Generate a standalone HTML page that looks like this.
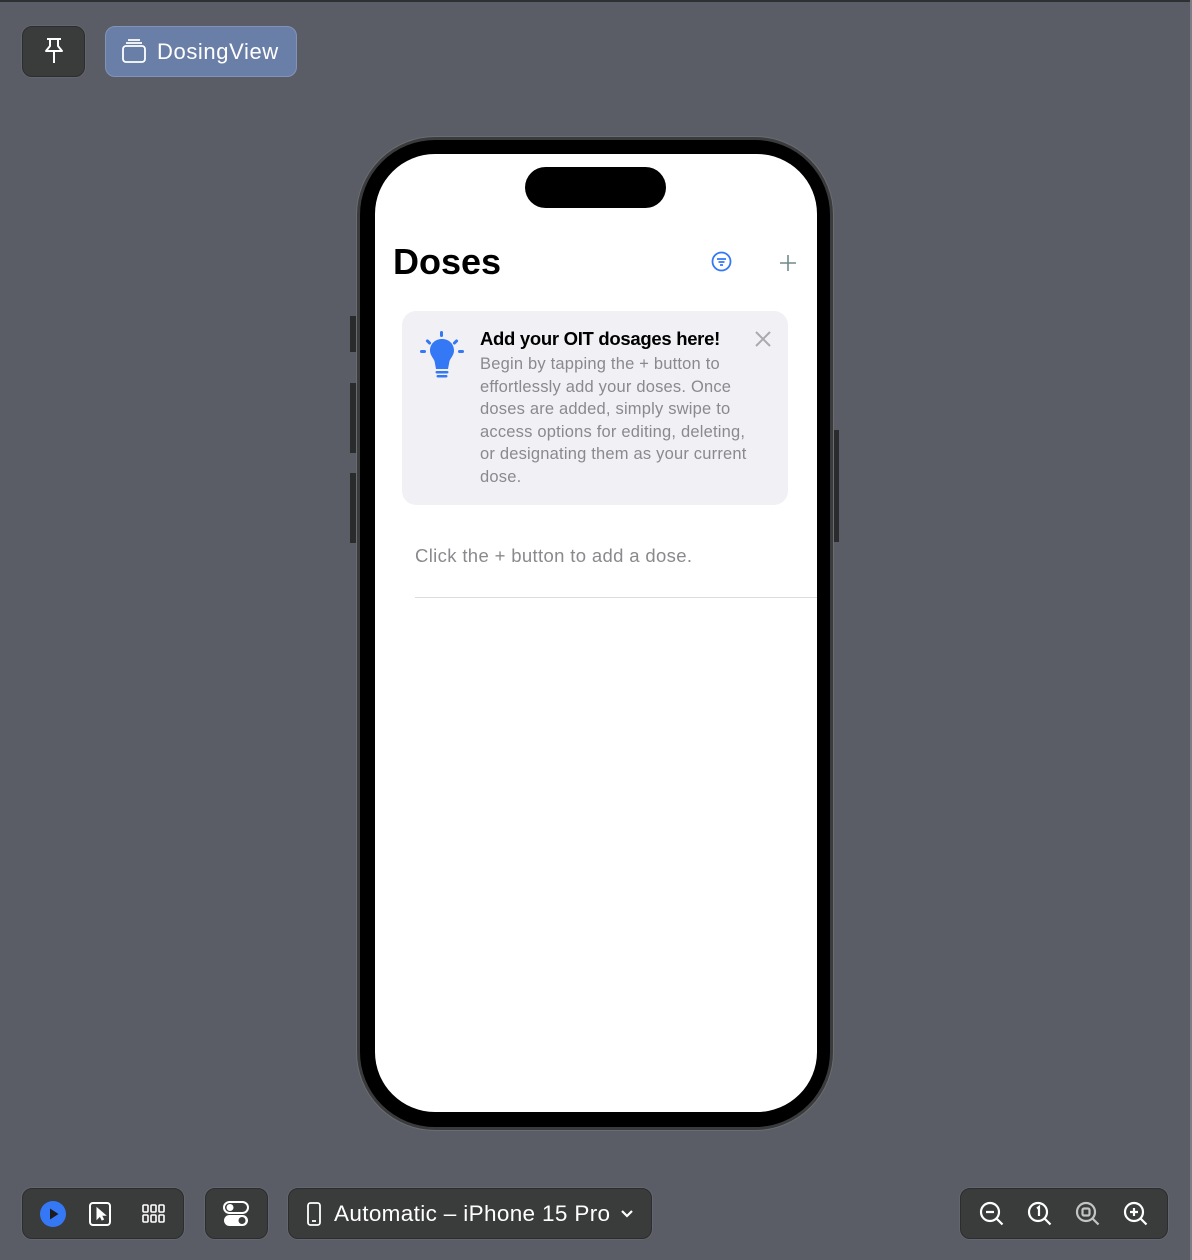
<!DOCTYPE html>
<html><head><meta charset="utf-8"><style>
*{margin:0;padding:0;box-sizing:border-box}
body{width:1192px;height:1260px;background:#5a5d65;font-family:"Liberation Sans",sans-serif;position:relative;overflow:hidden}
.topline{position:absolute;left:0;top:0;width:1192px;height:2px;background:#2e3033}
.rline{position:absolute;right:0;top:0;width:2px;height:1260px;background:#7b7e84}
.btn{position:absolute;background:#3a3b3b;border:1px solid #2c2d2e;border-radius:10px;box-shadow:0 0 0 1px rgba(255,255,255,.06)}
.phone{position:absolute;left:357px;top:137px;width:476px;height:993px;border-radius:78px;background:#000;border:3px solid #3a3b3d;box-shadow:0 0 0 1px #6a6c70}
.screen{position:absolute;left:375px;top:154px;width:442px;height:958px;border-radius:60px;background:#fff;overflow:hidden}
.side{position:absolute;background:#2a2b2d;width:6px}
</style></head><body>
<div class="topline"></div><div class="rline"></div>

<div class="btn" style="left:22px;top:26px;width:63px;height:51px;"></div>
<svg style="position:absolute;left:40px;top:36px" width="28" height="32" viewBox="0 0 28 32" fill="none" stroke="#fff" stroke-width="2" stroke-linejoin="round"><path d="M7 3h14M10 3v7l-4 5h16l-4-5V3M14 15v12"/></svg>

<div style="position:absolute;left:105px;top:26px;width:192px;height:51px;background:#6a7fa8;border-radius:10px;border:1px solid #8193b8"></div>
<svg style="position:absolute;left:121px;top:38px" width="26" height="26" viewBox="0 0 26 26" fill="none" stroke="#fff" stroke-width="1.8"><path d="M7 2h12M5 5h16"/><rect x="2" y="8" width="22" height="16" rx="3"/></svg>
<div style="position:absolute;left:157px;top:39px;color:#fff;font-size:22px;letter-spacing:0.6px">DosingView</div>

<div class="side" style="left:350px;top:316px;height:36px"></div>
<div class="side" style="left:350px;top:383px;height:70px"></div>
<div class="side" style="left:350px;top:473px;height:70px"></div>
<div class="side" style="left:833px;top:430px;height:112px"></div>

<div class="phone"></div>
<div class="screen">
  <div style="position:absolute;left:150px;top:13px;width:141px;height:41px;border-radius:21px;background:#000"></div>
  <div style="position:absolute;left:18px;top:87px;font-size:36px;font-weight:bold;color:#000">Doses</div>
  <svg style="position:absolute;left:336px;top:97px" width="21" height="21" viewBox="0 0 21 21" fill="none" stroke="#3478f6" stroke-width="1.8"><circle cx="10.5" cy="10.5" r="9"/><path d="M6 8h9M7.5 11h6M9 14h3"/></svg>
  <svg style="position:absolute;left:403px;top:99px" width="20" height="20" viewBox="0 0 20 20" stroke="#6f8a8c" stroke-width="1.6"><path d="M10 2v16M2 10h16"/></svg>
  <div style="position:absolute;left:27px;top:157px;width:386px;height:194px;border-radius:14px;background:#f1f1f5"></div>
  <svg style="position:absolute;left:44px;top:176px" width="46" height="52" viewBox="0 0 46 52" fill="#3478f6"><rect x="21" y="1" width="3" height="6" rx="1.5"/><rect x="8" y="9" width="3" height="6" rx="1.5" transform="rotate(-45 9.5 12)"/><rect x="35" y="9" width="3" height="6" rx="1.5" transform="rotate(45 36.5 12)"/><rect x="1" y="20" width="6" height="3" rx="1.5"/><rect x="39" y="20" width="6" height="3" rx="1.5"/><path d="M23 9c-7 0-12 5-12 11.5 0 4.5 3 7 4.5 10.5l1.5 8h12l1.5-8C32 27.5 35 25 35 20.5 35 14 30 9 23 9z"/><rect x="16.5" y="41" width="13" height="2.5" rx="1.2"/><rect x="17.5" y="45" width="11" height="2.5" rx="1.2"/></svg>
  <div style="position:absolute;left:105px;top:174px;font-size:18.5px;font-weight:bold;color:#000;letter-spacing:-0.3px">Add your OIT dosages here!</div>
  <svg style="position:absolute;left:379px;top:176px" width="18" height="18" viewBox="0 0 18 18" stroke="#a9a9ae" stroke-width="2"><path d="M2 2l14 14M16 2L2 16"/></svg>
  <div style="position:absolute;left:105px;top:199px;width:282px;font-size:16.5px;line-height:22.5px;color:#8a8a8e;letter-spacing:0.2px">Begin by tapping the + button to effortlessly add your doses. Once doses are added, simply swipe to access options for editing, deleting, or designating them as your current dose.</div>
  <div style="position:absolute;left:40px;top:391px;font-size:18.5px;color:#8a8a8e;letter-spacing:0.35px">Click the + button to add a dose.</div>
  <div style="position:absolute;left:40px;top:443px;width:410px;height:1px;background:#dcdcdf"></div>
</div>

<div class="btn" style="left:22px;top:1188px;width:162px;height:51px"></div>
<svg style="position:absolute;left:40px;top:1201px" width="26" height="26" viewBox="0 0 26 26"><circle cx="13" cy="13" r="13" fill="#3478f6"/><path d="M10 7.5v11l8.5-5.5z" fill="#1c1c1e"/></svg>
<svg style="position:absolute;left:87px;top:1201px" width="26" height="26" viewBox="0 0 26 26" fill="none" stroke="#fff" stroke-width="2"><rect x="3" y="2" width="20" height="22" rx="3"/><path d="M10 7v11l3-3 2 4 1.5-.7-2-4h4z" fill="#fff" stroke-width="1"/></svg>
<svg style="position:absolute;left:141px;top:1203px" width="26" height="22" viewBox="0 0 26 22" fill="none" stroke="#fff" stroke-width="1.6"><rect x="2" y="2" width="5" height="7" rx="1"/><rect x="10" y="2" width="5" height="7" rx="1"/><rect x="18" y="2" width="5" height="7" rx="1"/><rect x="2" y="12" width="5" height="7" rx="1"/><rect x="10" y="12" width="5" height="7" rx="1"/><rect x="18" y="12" width="5" height="7" rx="1"/></svg>

<div class="btn" style="left:205px;top:1188px;width:63px;height:51px"></div>
<svg style="position:absolute;left:222px;top:1200px" width="28" height="28" viewBox="0 0 28 28"><rect x="2" y="2" width="24" height="11" rx="5.5" fill="none" stroke="#fff" stroke-width="2"/><circle cx="8" cy="7.5" r="3.5" fill="#fff"/><rect x="2" y="15" width="24" height="11" rx="5.5" fill="#fff"/><circle cx="20" cy="20.5" r="3.5" fill="#3a3b3b"/></svg>

<div class="btn" style="left:288px;top:1188px;width:364px;height:51px"></div>
<svg style="position:absolute;left:306px;top:1201px" width="16" height="26" viewBox="0 0 16 26" fill="none" stroke="#fff" stroke-width="1.8"><rect x="2" y="2" width="12" height="22" rx="2.5"/><path d="M6 20h4"/></svg>
<div style="position:absolute;left:334px;top:1201px;color:#fff;font-size:22.5px;letter-spacing:0.35px">Automatic – iPhone 15 Pro</div>
<svg style="position:absolute;left:619px;top:1207px" width="16" height="14" viewBox="0 0 16 14" fill="none" stroke="#fff" stroke-width="2.2"><path d="M3 4l5 5 5-5"/></svg>

<div class="btn" style="left:960px;top:1188px;width:208px;height:51px"></div>
<svg style="position:absolute;left:976px;top:1199px" width="180" height="30" viewBox="0 0 180 30" fill="none" stroke="#fff" stroke-width="2.2">
<circle cx="14" cy="13" r="9"/><path d="M20.5 19.5l6 6M10 13h8"/>
<g transform="translate(48 0)"><circle cx="14" cy="13" r="9"/><path d="M20.5 19.5l6 6M13 9.5l2-1.5v9"/></g>
<g transform="translate(96 0)" stroke="#c4c4c6"><circle cx="14" cy="13" r="9"/><path d="M20.5 19.5l6 6"/><rect x="10.5" y="9.5" width="7" height="7" rx="1.5"/></g>
<g transform="translate(144 0)"><circle cx="14" cy="13" r="9"/><path d="M20.5 19.5l6 6M10 13h8M14 9v8"/></g>
</svg>
</body></html>
